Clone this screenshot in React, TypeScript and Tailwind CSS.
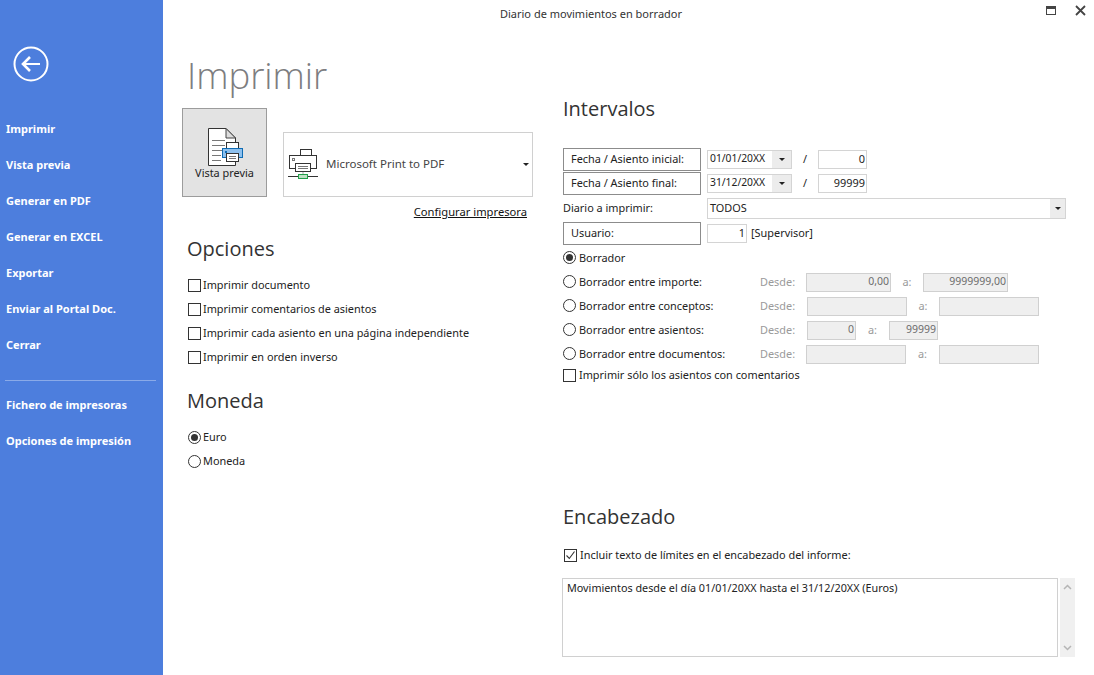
import React from "react";

const font = { fontFamily: '"Noto Sans", sans-serif' };
const headFont = { fontFamily: '"Open Sans", sans-serif' };

function Radio({ on }: { on?: boolean }) {
  return (
    <span className="w-[13px] h-[13px] rounded-full border border-[#333] bg-white flex items-center justify-center shrink-0">
      {on && <span className="w-[7px] h-[7px] rounded-full bg-[#333]" />}
    </span>
  );
}

function Check({ on }: { on?: boolean }) {
  return (
    <span className="w-[13px] h-[13px] border border-[#333] bg-white flex items-center justify-center shrink-0">
      {on && (
        <svg width="11" height="11" viewBox="0 0 11 11" fill="none" stroke="#333" strokeWidth="1.1">
          <path d="M1.5 5.5 L4.3 8.5 L9.5 1.5" />
        </svg>
      )}
    </span>
  );
}

function Caret() {
  return <span className="w-0 h-0 border-l-[3px] border-r-[3px] border-t-[3px] border-l-transparent border-r-transparent border-t-[#222]" />;
}

function OptionRow({ children, check, on }: { children: React.ReactNode; check?: boolean; on?: boolean }) {
  return (
    <div className="h-6 flex items-center gap-[2px]">
      {check ? <Check on={on} /> : <Radio on={on} />}
      <span>{children}</span>
    </div>
  );
}

function Disabled({ w, v, ml }: { w: string; v?: string; ml: string }) {
  return (
    <span className={`${w} ${ml} h-[19px] border border-[#d0d0d0] bg-[#efefef] text-[#6d6d6d] text-[10.5px] flex items-center justify-end pr-px shrink-0`}>{v}</span>
  );
}

function RangeRow({ label, on, children }: { label: string; on?: boolean; children?: React.ReactNode }) {
  return (
    <div className="h-6 flex items-center">
      <div className="w-[197px] flex items-center gap-[3px] shrink-0">
        <Radio on={on} />
        <span>{label}</span>
      </div>
      {children}
    </div>
  );
}

function Desde() {
  return <span className="text-[#9a9a9a] w-[46px] shrink-0">Desde:</span>;
}

function A({ w }: { w: string }) {
  return <span className={`text-[#9a9a9a] ${w} shrink-0 text-center`}>a:</span>;
}

function LabelBox({ children, h }: { children: React.ReactNode; h: string }) {
  return <div className={`w-[138px] ${h} border border-[#8c8c8c] flex items-center pl-[7px] shrink-0`}>{children}</div>;
}

function DateBox({ v }: { v: string }) {
  return (
    <div className="ml-[6px] w-[85px] h-[19px] border border-[#d4d4d4] flex items-center shrink-0">
      <span className="flex-1 pl-[2px] text-[10.3px]">{v}</span>
      <span className="w-[19px] h-full bg-[#ececec] flex items-center justify-center"><Caret /></span>
    </div>
  );
}

function NumBox({ v, w, ml }: { v: string; w: string; ml: string }) {
  return <div className={`${w} ${ml} h-[19px] border border-[#d4d4d4] flex items-center justify-end pr-px shrink-0`}>{v}</div>;
}

function DocIcon() {
  return (
    <svg width="42" height="42" viewBox="0 0 42 42" fill="none" className="ml-[3px]">
      <path d="M3.5 3.5 H21 L30.5 13 V40.5 H3.5 Z" fill="#fff" stroke="#333" strokeWidth="1" />
      <path d="M21 3.5 V13 H30.5 Z" fill="#ddd" stroke="#444" strokeWidth="1" />
      <path d="M7 15.5 H20 M7 20.5 H20 M7 25.5 H17 M7 30.5 H16 M7 35.5 H16" stroke="#777" strokeWidth="1" />
      <rect x="21.5" y="17.5" width="12" height="7" fill="#fff" stroke="#333" />
      <rect x="17.5" y="23.5" width="20" height="9" fill="#8dc0ee" stroke="#0f6cb4" />
      <rect x="20" y="26" width="2" height="2" fill="#0f6cb4" />
      <rect x="21.5" y="28.5" width="12" height="8" fill="#fff" stroke="#333" />
      <path d="M24 31.5 H31 M24 33.5 H31" stroke="#777" strokeWidth="1" />
    </svg>
  );
}

function PrinterIcon() {
  return (
    <svg width="32" height="34" viewBox="0 0 32 34" fill="none" className="shrink-0">
      <rect x="13.5" y="1.5" width="11" height="6" fill="#fff" stroke="#333" />
      <rect x="2.5" y="7.5" width="27" height="13" fill="#fff" stroke="#333" />
      <rect x="5.5" y="10.5" width="2" height="2" stroke="#777" />
      <rect x="8.5" y="15.5" width="15" height="8" fill="#fff" stroke="#333" />
      <path d="M11 18.5 H21 M11 20.5 H21" stroke="#777" />
      <path d="M16 24 V27" stroke="#aaa" />
      <path d="M1 28.5 H31" stroke="#333" />
      <rect x="11.5" y="26.5" width="9" height="4" fill="#bfe0c4" stroke="#22a04a" />
    </svg>
  );
}

const menuA = ["Imprimir", "Vista previa", "Generar en PDF", "Generar en EXCEL", "Exportar", "Enviar al Portal Doc.", "Cerrar"];
const menuB = ["Fichero de impresoras", "Opciones de impresión"];

export default function App() {
  return (
    <div style={font} className="w-[1094px] h-[675px] flex bg-white text-[10.9px] text-[#222] overflow-hidden">
      <aside className="w-[163px] h-full bg-[#4d7edd] text-white text-[11px] font-bold shrink-0 flex flex-col">
        <div className="pl-[13px] pt-[46px]">
          <svg width="36" height="36" viewBox="0 0 36 36" fill="none" stroke="#fff">
            <circle cx="18" cy="18" r="16.5" strokeWidth="2" />
            <path d="M27 18 H11" strokeWidth="2" />
            <path d="M17 11 L10 18 L17 25" strokeWidth="2.6" />
          </svg>
        </div>
        <nav className="pt-[29px] pl-[6px] flex flex-col">
          {menuA.map((m) => (
            <div key={m} className="h-9 flex items-center">{m}</div>
          ))}
        </nav>
        <div className="h-px bg-[#8aaae8] ml-[5px] mr-[7px] mt-[17px]" />
        <nav className="pt-[6px] pl-[6px] flex flex-col">
          {menuB.map((m) => (
            <div key={m} className="h-9 flex items-center">{m}</div>
          ))}
        </nav>
      </aside>

      <main className="flex-1 flex flex-col min-w-0">
        <header className="h-[28px] flex items-center relative shrink-0">
          <span className="w-full text-center text-[11px] text-[#333] pr-[75px]">Diario de movimientos en borrador</span>
          <svg className="absolute left-[883px] top-[6px]" width="10" height="10" viewBox="0 0 10 10" fill="none" stroke="#444">
            <rect x="0.5" y="0.5" width="9" height="8" />
            <path d="M0 2 H10" strokeWidth="2" />
          </svg>
          <svg className="absolute left-[912px] top-[5px]" width="11" height="11" viewBox="0 0 11 11" fill="none" stroke="#444" strokeWidth="1.8">
            <path d="M1 1 L10 10 M10 1 L1 10" />
          </svg>
        </header>

        <div className="flex flex-1 min-h-0">
          <section className="w-[400px] pl-[19px] shrink-0">
            <h1 className="pl-[5px] h-[80px] pt-[23px] text-[36.5px] leading-[48px] font-light text-[#7d7d80]" style={headFont}>Imprimir</h1>
            <div className="flex items-end">
              <div className="w-[85px] h-[89px] border border-[#9c9c9c] bg-[#e3e3e3] flex flex-col items-center pt-[16px] shrink-0">
                <DocIcon />
                <span className="mt-[-2px]">Vista previa</span>
              </div>
              <div className="ml-[16px] w-[250px] h-[65px] border border-[#d0d0d0] flex items-center pl-[3px] pr-[3px]">
                <PrinterIcon />
                <span className="ml-[7px] mt-[-2px] flex-1 text-[11.5px] text-[#444]">Microsoft Print to PDF</span>
                <Caret />
              </div>
            </div>
            <div className="w-[345px] text-right mt-[7px] h-[16px] leading-[16px] text-[11.2px] text-[#111] underline">Configurar impresora</div>
            <h2 className="pl-[5px] mt-[14px] h-[30px] text-[20px] leading-[30px] text-[#333]" style={headFont}>Opciones</h2>
            <div className="pl-[6px] mt-[9px] flex flex-col">
              <OptionRow check>Imprimir documento</OptionRow>
              <OptionRow check>Imprimir comentarios de asientos</OptionRow>
              <OptionRow check>Imprimir cada asiento en una página independiente</OptionRow>
              <OptionRow check>Imprimir en orden inverso</OptionRow>
            </div>
            <h2 className="pl-[5px] mt-[17px] h-[30px] text-[20px] leading-[30px] text-[#333]" style={headFont}>Moneda</h2>
            <div className="pl-[6px] mt-[9px] flex flex-col">
              <OptionRow on>Euro</OptionRow>
              <OptionRow>Moneda</OptionRow>
            </div>
          </section>

          <section className="flex-1 min-w-0">
            <h2 className="h-[30px] mt-[66px] text-[20px] leading-[30px] text-[#333]" style={headFont}>Intervalos</h2>
            <div className="mt-[23px] flex flex-col">
              <div className="h-[24px] flex items-center">
                <LabelBox h="h-[23px]">Fecha / Asiento inicial:</LabelBox>
                <DateBox v="01/01/20XX" />
                <span className="w-[26px] text-center shrink-0">/</span>
                <NumBox v="0" w="w-[49px]" ml="" />
              </div>
              <div className="h-[24px] flex items-center">
                <LabelBox h="h-[23px]">Fecha / Asiento final:</LabelBox>
                <DateBox v="31/12/20XX" />
                <span className="w-[26px] text-center shrink-0">/</span>
                <NumBox v="99999" w="w-[49px]" ml="" />
              </div>
              <div className="h-[26px] flex items-center">
                <span className="w-[144px] shrink-0">Diario a imprimir:</span>
                <div className="w-[359px] h-[21px] border border-[#d4d4d4] flex items-center shrink-0">
                  <span className="flex-1 pl-[2px] text-[#222]">TODOS</span>
                  <span className="w-[15px] h-full bg-[#ececec] flex items-center justify-center"><Caret /></span>
                </div>
              </div>
              <div className="h-[24px] flex items-center">
                <LabelBox h="h-[23px]">Usuario:</LabelBox>
                <NumBox v="1" w="w-[40px]" ml="ml-[6px]" />
                <span className="ml-[4px]">[Supervisor]</span>
              </div>
              <div className="mt-[1px]">
                <RangeRow label="Borrador" on />
                <RangeRow label="Borrador entre importe:">
                  <Desde />
                  <Disabled w="w-[85px]" v="0,00" ml="" />
                  <A w="w-[32px]" />
                  <Disabled w="w-[85px]" v="9999999,00" ml="" />
                </RangeRow>
                <RangeRow label="Borrador entre conceptos:">
                  <Desde />
                  <Disabled w="w-[100px]" ml="ml-px" />
                  <A w="w-[32px]" />
                  <Disabled w="w-[100px]" ml="" />
                </RangeRow>
                <RangeRow label="Borrador entre asientos:">
                  <Desde />
                  <Disabled w="w-[49px]" v="0" ml="ml-px" />
                  <A w="w-[33px]" />
                  <Disabled w="w-[49px]" v="99999" ml="" />
                </RangeRow>
                <RangeRow label="Borrador entre documentos:">
                  <Desde />
                  <Disabled w="w-[100px]" ml="" />
                  <A w="w-[33px]" />
                  <Disabled w="w-[100px]" ml="" />
                </RangeRow>
              </div>
              <div className="h-[18px] flex items-center gap-[3px]">
                <Check />
                <span>Imprimir sólo los asientos con comentarios</span>
              </div>
            </div>
            <h2 className="mt-[118px] h-[30px] text-[20px] leading-[30px] text-[#333]" style={headFont}>Encabezado</h2>
            <div className="mt-[13px] h-[20px] flex items-center gap-[3px] pl-px">
              <Check on />
              <span>Incluir texto de límites en el encabezado del informe:</span>
            </div>
            <div className="mt-[13px] flex ml-[-1px]">
              <div className="w-[496px] h-[79px] border border-[#d0d0d0] pl-[4px] pt-px text-[10.8px]">Movimientos desde el día 01/01/20XX hasta el 31/12/20XX (Euros)</div>
              <div className="ml-[2px] w-[15px] h-[79px] bg-[#f0f0f0] flex flex-col justify-between items-center py-[6px]">
                <svg width="9" height="6" viewBox="0 0 9 6" fill="none" stroke="#b5b5b5" strokeWidth="1.5"><path d="M1 5 L4.5 1.5 L8 5" /></svg>
                <svg width="9" height="6" viewBox="0 0 9 6" fill="none" stroke="#b5b5b5" strokeWidth="1.5"><path d="M1 1 L4.5 4.5 L8 1" /></svg>
              </div>
            </div>
          </section>
        </div>
      </main>
    </div>
  );
}
